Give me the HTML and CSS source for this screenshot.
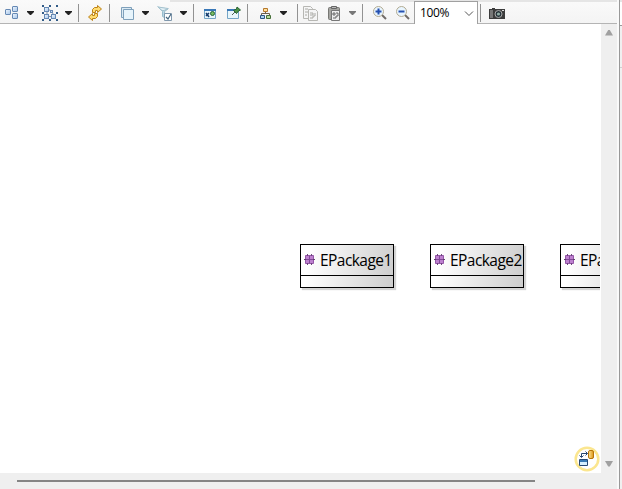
FILE: index.html
```
<!DOCTYPE html>
<html lang="en">
<head>
<meta charset="utf-8">
<title>Diagram editor</title>
<link rel="stylesheet" href="styles.css">
</head>
<body>
<svg class="defs" width="0" height="0">
  <defs>
    <linearGradient id="blue" x2="1" y2="1"><stop stop-color="#f0f7ff"/><stop offset="1" stop-color="#a4c4e8"/></linearGradient>
    <linearGradient id="gold" x2="1"><stop stop-color="#ffe79a"/><stop offset="1" stop-color="#dd9413"/></linearGradient>
    <symbol id="down" viewBox="0 0 7 4"><path d="M0 0h7v1L4 4H3L0 1z"/></symbol>
    <symbol id="window" viewBox="0 0 16 16"><path d="M2.500 4.500h11v9h-11z" fill="#e8f6fb" stroke="#75a5c6"/><path d="M2 4h12v2H2z" fill="#3978b8"/></symbol>
    <symbol id="package" viewBox="0 0 12 12"><path d="M1.500 1.500h8v8h-8z" fill="#bd80cf" stroke="#9555a8"/><path d="M3.500 0v11M7.500 0v11" stroke="#6e477d"/><path d="M2 2h7v7H2z" fill="#bd80cf"/><path d="M5.500 2v7M2 5.500h7" stroke="#834a99"/><path d="M0 5.500h2M9 5.500h2" stroke="#5e446b"/></symbol>
  </defs>
</svg>
<div class="app">
  <main class="editor">
    <div class="toolbar">
      <svg class="icon" viewBox="0 0 16 16"><g fill="url(#blue)" stroke="#6689b4"><rect x="1.500" y="4.500" width="5" height="5" rx=".5"/><rect x="8.500" y="1.500" width="5" height="5" rx=".5"/><rect x="8.500" y="8.500" width="5" height="5" rx=".5"/></g></svg>
      <svg class="arrow"><use href="#down"/></svg>
      <svg class="icon" viewBox="0 0 16 16"><path d="M5 4l5 2 2 6M5 5v6l6 1" fill="none" stroke="#7c8da3"/><g fill="url(#blue)" stroke="#6689b4"><rect x="2.500" y="2.500" width="4" height="4"/><rect x="8.500" y="5.500" width="2" height="2"/><rect x="2.500" y="9.500" width="4" height="4"/><rect x="9.500" y="9.500" width="4" height="4"/></g><path d="M0 0h2v2H0zM7 0h2v2H7zM14 0h2v2h-2zM0 7h2v2H0zM14 7h2v2h-2zM0 14h2v2H0zM7 14h2v2H7zM14 14h2v2h-2z" fill="#315b87"/></svg>
      <svg class="arrow"><use href="#down"/></svg>
      <i class="sep"></i>
      <svg class="icon" viewBox="0 0 16 16"><g fill="#ffdc70" stroke="#bd8218" stroke-linejoin="round"><path d="M5.500 7.500V4.500L7.500 2.500h3v-2l4 3.500-4 3.500v-2H8.500v2z"/><path d="M10.500 8.500v3l-2 2h-3v2L1.500 12l4-3.500v2h2v-2z"/></g></svg>
      <i class="sep"></i>
      <svg class="icon" viewBox="0 0 16 16"><g stroke="#7ea0bb"><path d="M2.500 2.500h10v10h-10z" fill="#dbeaf3"/><path d="M4.500 4.500h10v10h-10z" fill="#e7f4fb"/></g></svg>
      <svg class="arrow"><use href="#down"/></svg>
      <svg class="icon" viewBox="0 0 16 16"><path d="M.500 1.500l5 5v5l2 1v-6l4-3" fill="#b9d8e7" stroke="#9abccb"/><path d="M1 2l10 1.500-4 2H5z" fill="#e2f0f6" stroke="#a5c2ce"/><path d="M7.500 8.500h7v7h-7z" fill="#fff" stroke="#8098ad"/><path d="M9 12l2 2 3-5" fill="none" stroke="#456680" stroke-width="1.200"/></svg>
      <svg class="arrow"><use href="#down"/></svg>
      <i class="sep"></i>
      <svg class="icon" viewBox="0 0 16 16"><use href="#window"/><path d="M4 8l3 4M4 11l3-3" stroke="#163c6f" stroke-width="1.500"/><circle cx="10.500" cy="8.500" r="2" fill="#79bd61" stroke="#236236"/></svg>
      <svg class="icon" viewBox="0 0 16 16"><use href="#window" x="-1"/><path d="M11 2l3.500 3-2 1-2 2.500-3-3 3-1.500z" fill="#4d9445" stroke="#286234"/><path d="M9 7l-3 3" stroke="#536356"/></svg>
      <i class="sep"></i>
      <svg class="icon" viewBox="0 0 16 16"><path d="M7.500 6v3M3.500 11V8.500h8V11" fill="none" stroke="#6b604c"/><path d="M5.500 3.500h4v3h-4z" fill="#ffe09b" stroke="#b5782d"/><path d="M2.500 10.500h4v3h-4z" fill="#a9d3ef" stroke="#2d5684"/><path d="M8.500 10.500h4v3h-4z" fill="#b4dc99" stroke="#456e38"/></svg>
      <svg class="arrow"><use href="#down"/></svg>
      <i class="sep"></i>
      <svg class="icon" viewBox="0 0 16 16"><g fill="#f5f5f5" stroke="#b7b7b3"><path d="M.500 1.500h7l2 2v10h-9z"/><path d="M5.500 4.500h7l2 2v9h-9z"/></g><path d="M2 4h3M2 7h3M2 10h2M7 8h3v2H7M12 8v3h-2M7 13h3v-2" fill="none" stroke="#aaaaa5"/></svg>
      <svg class="icon" viewBox="0 0 16 16"><rect x="1.500" y="2.500" width="11" height="12" rx="1" fill="#a5a5a1" stroke="#777773"/><path d="M4.500 1.500h5v2h-5z" fill="#bbb" stroke="#666"/><path d="M4.500 5.500h8v10h-8z" fill="#eee" stroke="#777"/><path d="M6 8h2v2H6zM9 8h2v3H9M6 13h3v-2" fill="none" stroke="#666"/></svg>
      <svg class="arrow dim"><use href="#down"/></svg>
      <i class="sep"></i>
      <svg class="icon" viewBox="0 0 16 16"><path d="M10 10l4 4" stroke="#706b68" stroke-width="2"/><circle cx="6.500" cy="6.500" r="5" fill="#e8f5ff" stroke="#b3ab91"/><path d="M3.500 6.500h6M6.500 3.500v6" stroke="#2450b0" stroke-width="2"/></svg>
      <svg class="icon" viewBox="0 0 16 16"><path d="M10 10l4 4" stroke="#706b68" stroke-width="2"/><circle cx="6.500" cy="6.500" r="5" fill="#e8f5ff" stroke="#b3ab91"/><path d="M3.500 6.500h6" stroke="#2450b0" stroke-width="2"/></svg>
      <div class="combo"><span>100%</span><svg width="10" height="6" viewBox="0 0 10 6"><path d="M1 .500l4 4 4-4" fill="none" stroke="#555"/></svg></div>
      <i class="sep"></i>
      <svg class="icon" viewBox="0 0 16 16"><path d="M0 4h3V3h3v1h10v10H0z" fill="#3c3c3c"/><path d="M1 5h3v8H1z" fill="#777"/><circle cx="9.500" cy="9" r="3.500" fill="#27333a" stroke="#aaa"/><circle cx="9.500" cy="9" r="1.600" fill="#92aea5"/><path d="M13 5h2v1h-2z" fill="#ddd"/></svg>
    </div>
    <div class="workspace">
      <section class="canvas">
        <article class="node"><header><svg width="12" height="12"><use href="#package"/></svg><span>EPackage1</span></header></article>
        <article class="node"><header><svg width="12" height="12"><use href="#package"/></svg><span>EPackage2</span></header></article>
        <article class="node"><header><svg width="12" height="12"><use href="#package"/></svg><span>EPackage3</span></header></article>
        <svg class="badge" viewBox="0 0 26 26"><circle cx="13" cy="13" r="11.300" fill="#fff" stroke="#fbe68f" stroke-width="2.500"/><path d="M7.500 11V7.500h6M5.500 9.500l2 2 2-2M11.500 5.500l2 2-2 2" fill="none" stroke="#28466f"/><path d="M5.500 13.500h8v6h-8z" fill="#d6efff" stroke="#284a75"/><path d="M6 14h7v2H6z" fill="#397ab5"/><rect x="14.500" y="4.500" width="5" height="8" rx="1.500" fill="url(#gold)" stroke="#b77408"/></svg>
      </section>
      <div class="vscroll">
        <svg width="10" height="7" viewBox="0 0 10 7"><path d="M1 6.500L4.200 1h1.600L9 6.500z"/></svg>
        <svg width="10" height="7" viewBox="0 0 10 7"><path d="M1 1L4.200 6.500h1.600L9 1z"/></svg>
      </div>
    </div>
    <div class="hscroll"><div class="thumb"></div></div>
  </main>
  <aside class="side"><div class="side-head"></div><div class="side-bar"></div></aside>
</div>
</body>
</html>
```
FILE: styles.css
```
* { box-sizing: border-box; }
body { margin: 0; overflow: hidden; background: #f0f0f0; font-family: "Noto Sans", sans-serif; }
svg { display: block; }
.defs { position: absolute; }
.app { display: grid; grid-template-columns: 617px 5px; width: 622px; height: 489px; }
.editor { display: grid; grid-template-rows: 24px 449px 16px; min-width: 0; }
.toolbar {
  display: grid;
  grid-template-columns: 23px 15px 23px 13px 9px 22px 10px 23px 15px 23px 13px 9px 24px 21px 11px 22px 17px 6px 24px 22px 13px 10px 23px 19px 66px 9px 20px;
  align-items: start;
  height: 24px;
  padding: 5px 0 0 4px;
  border-bottom: 1px solid #b4b4b4;
  background: linear-gradient(#e5e5e5, #e5e5e5) 170px 0 / 447px 2px no-repeat, linear-gradient(#fafafa, #f4f4f4);
}
.icon { width: 16px; height: 16px; }
.arrow { width: 7px; height: 4px; margin-top: 6px; fill: #222; }
.arrow.dim { fill: #777; }
.sep { width: 1px; height: 18px; margin-top: -1px; background: #929292; }
.combo { display: flex; align-items: center; justify-content: space-between; width: 64px; height: 23px; margin-top: -4px; padding: 0 3px 0 5px; border: 1px solid #a0a0a0; border-bottom: 0; background: #fff; font: 12px/16px "Open Sans", sans-serif; letter-spacing: -.4px; }
.combo span { margin-top: -1px; }
.combo svg { margin-top: 2px; }
.workspace { display: grid; grid-template-columns: 600px 17px; }
.canvas { position: relative; display: flex; gap: 36px; padding: 220px 0 0 300px; overflow: hidden; background: #fff; }
.node { flex: 0 0 94px; min-width: 0; height: 44px; border: 1px solid #000; background: linear-gradient(100deg, #fff 10%, #cdcdcd); box-shadow: 2px 2px 1px #d4d4d4; }
.node header { display: flex; align-items: center; height: 31px; padding-left: 3px; border-bottom: 1px solid #000; }
.node header svg { flex: none; }
.node span { margin: -1px 0 0 4px; color: #000; font: 15.5px/22px "Open Sans", sans-serif; letter-spacing: -.55px; white-space: nowrap; }
.badge { position: absolute; right: 0; bottom: 1px; width: 26px; height: 26px; }
.vscroll { display: flex; flex-direction: column; align-items: center; justify-content: space-between; padding: 5px 0 6px; border-left: 1px solid #fff; background: #efefef; fill: #a0a0a0; }
.hscroll { padding: 7px 0 0 17px; background: #efefef; }
.thumb { width: 518px; height: 2px; background: #858585; }
.side { display: grid; grid-template-rows: 26px 42px 1fr; margin-left: 2px; border-left: 1px solid #999; box-shadow: -2px 0 #fafafa; background: #f0f0f0; }
.side-head { border-top: 2px solid #e5e5e5; border-bottom: 1px solid #999; background: #fff; }
.side-bar { border-bottom: 1px solid #d0d0d0; }
```
